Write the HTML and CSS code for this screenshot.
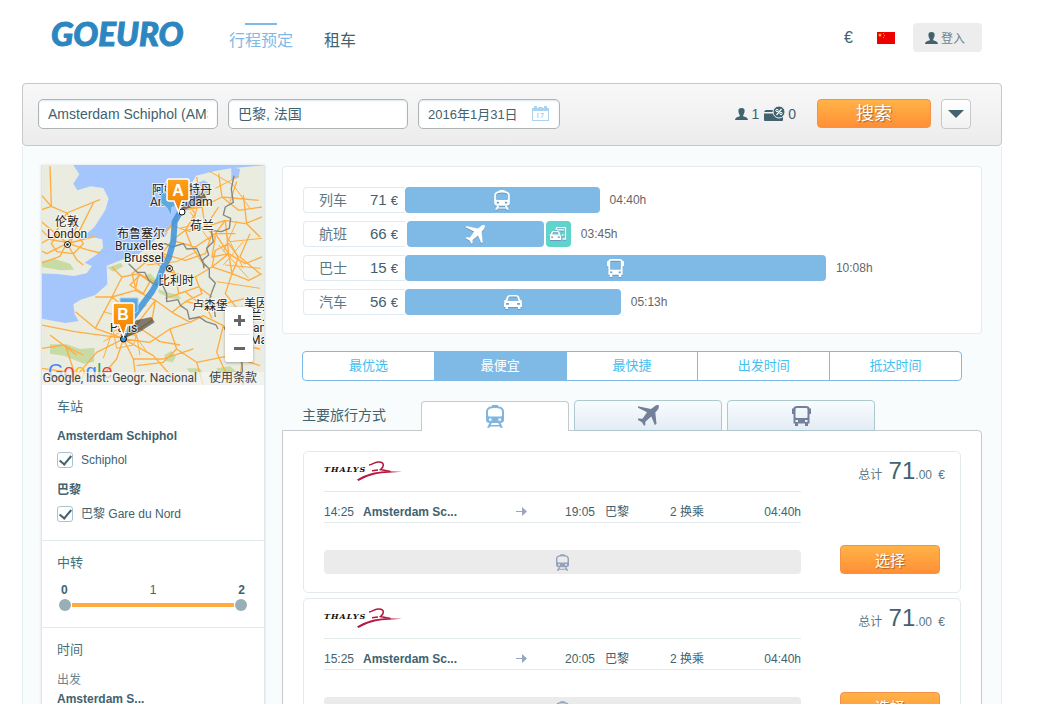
FILE: index.html
```html
<!DOCTYPE html>
<html lang="zh-CN">
<head>
  <meta charset="UTF-8" />
  <meta name="viewport" content="width=device-width, initial-scale=1.0" />
  <title>GoEuro</title>
  <link rel="stylesheet" href="styles.css">
</head>
<body>
  <!-- shared icons -->
  <svg class="sprite" aria-hidden="true">
    <symbol id="i-train" viewBox="0 0 18 23">
      <path fill-rule="evenodd" d="M6 0h6v1.200c4 .4 6 2.300 6 5.300v8.500c0 2-1.500 3-3.500 3h-11C1.500 18 0 17 0 15V6.500c0-3 2-4.900 6-5.300zM2 6.500V10q0 1.500 1.500 1.500h11q1.500 0 1.500-1.500V6.500C16 4 13.500 3 9 3S2 4 2 6.500zM3 13.500v2.300h2.500v-2.300zM12.500 13.500v2.300H15v-2.300z"/>
      <path d="M3.500 18h2.300l-1 2h8.400l-1-2h2.300l2.500 4.800h-2.500l-.7-1.400H4.200l-.7 1.400H1z"/>
    </symbol>
    <symbol id="i-plane" viewBox="0 0 21 21">
      <path d="M20.700 0c-2-.3-3.500.3-5 2L13 4 0 1.200v1.500l9 4.600-4.500 6.500-4.500-.2V15l4 2.200 2 3.500 1.300-.7v-3.300l6-5.100L16.800 20l1.700-1-1.200-11.500L19.500 5c1.300-1.500 1.500-3 1.200-5z"/>
    </symbol>
    <symbol id="i-bus" viewBox="0 0 19 20">
      <path fill-rule="evenodd" d="M5 0h9q3.500.2 3.500 2.500H19V8h-1.500v9.500H16V20h-3v-2.500H6V20H3v-2.500H1.500V8H0V2.500h1.500Q1.500.2 5 0zM3.500 3.500V11q0 1 1 1h10q1 0 1-1V3.500q0-1.500-1-1.500h-10q-1 0-1 1.500zM3.500 14v2H6v-2zM13 14v2h2.500v-2z"/>
    </symbol>
    <symbol id="i-car" viewBox="0 0 18 14">
      <path fill-rule="evenodd" d="M6 0h6q2.500 0 3 1.500L16.300 5l1.700.4v1l-.7.4q.7.800.7 1.700V12h-1.500v2h-2.500v-2H4v2H1.500v-2H0V8.500q0-.9.7-1.700L0 6.400v-1L1.700 5 3 1.500Q3.500 0 6 0zM4.800 2L3.500 6h11l-1.300-4Q13 1.500 12 1.500H6Q5 1.500 4.800 2zM2.200 8v2h2.600V8zM13.200 8v2h2.600V8z"/>
    </symbol>
    <symbol id="i-transfer" viewBox="0 0 18 14">
      <path fill="none" stroke="#fff" stroke-width="1.300" d="M7 3l.5-2q.2-.4 1-.4h7q1 0 1 1V12h-3M8 2.800h7M13 8h1.500"/>
      <path fill-rule="evenodd" d="M4 4h5q1 0 1.500 1L11.200 7.500 12 9v4H1V9l-.7-1.500 1.500-.3L2.500 5Q3 4 4 4zM4 5.300L3.300 7.500h6.400L9 5.300zM2.200 9.500V11h2V9.500zM8.800 9.500V11h2V9.500z"/>
    </symbol>
    <symbol id="i-user" viewBox="0 0 13 12">
      <path d="M6.500 0C9 0 10 1.500 9.500 4c-.3 1.500-.7 2.200-1.300 3v1.300C10 9 12.500 9.300 13 12H0c.5-2.700 3-3 4.800-3.700V7C4.200 6.200 3.800 5.500 3.500 4 3 1.500 4 0 6.500 0z"/>
    </symbol>
    <symbol id="i-arrow" viewBox="0 0 11 9">
      <path d="M0 4h6V0l5 4.500L6 9V5H0z"/>
    </symbol>
    <symbol id="i-thalys" viewBox="0 0 45 20">
      <path d="M0 18.500C8 13.500 19 10.500 28 10.300l17 .5-17 1.200C19 12.500 9 15.500 1.500 20z"/>
      <path fill="none" stroke="#b5193f" stroke-width="1.500" d="M12 4c3-.2 5-2.500 9-3 6-.7 7 4 2.500 7.500l10 2M15 9.800l6-.8"/>
    </symbol>
  </svg>

  <div class="page">
    <header class="header">
      <a href="#" class="logo">GOEURO</a>
      <nav class="nav">
        <a href="#" class="active">行程预定</a>
        <a href="#">租车</a>
      </nav>
      <div class="user-tools">
        <a href="#" class="currency">€</a>
        <a href="#" class="flag" aria-label="中文">
          <svg width="18" height="12" viewBox="0 0 18 12"><rect width="18" height="12" fill="#ee0000"/><path fill="#fd0" d="M3 1l.6 1.400H5L3.900 3.300l.4 1.400L3 3.900l-1.300.8.4-1.400L1 2.400h1.400z"/><path fill="#fa0" d="M6 1h1v1H6zM7 3h1v1H7zM6 5h1v1H6z"/></svg>
        </a>
        <button class="login-btn"><svg width="13" height="12"><use href="#i-user"/></svg>登入</button>
      </div>
    </header>

    <form class="search-bar">
      <input type="text" class="field" aria-label="出发地" value="Amsterdam Schiphol (AMS), 荷兰">
      <input type="text" class="field" aria-label="目的地" value="巴黎, 法国">
      <div class="date-field">
        <input type="text" class="field" aria-label="日期" value="2016年1月31日">
        <svg width="17" height="15" viewBox="0 0 17 15" fill="#a9d3ee"><path fill-rule="evenodd" d="M0 2h2V0h3v2h1.500V1h4v1H12V0h3v2h2v13H0zM1 5v9h15V5z"/><path fill="none" stroke="#a9d3ee" d="M5 8l1-.5V12M8.500 7.500h3L9.500 12"/></svg>
      </div>
      <div class="passengers">
        <svg width="13" height="12"><use href="#i-user"/></svg><span>1</span>
        <svg class="card-icon" width="21" height="16" viewBox="0 0 21 16"><path d="M1.500 4H10v2H0zM0 7.500h19V14q0 1-1 1H1q-1 0-1-1z"/><circle cx="15" cy="6" r="6" stroke="#f3f3f3"/><path fill="none" stroke="#fff" stroke-width="1.200" d="M12.500 9l5-6"/><circle cx="13" cy="4.500" r="1.200" fill="none" stroke="#fff"/><circle cx="17" cy="7.500" r="1.200" fill="none" stroke="#fff"/></svg><span>0</span>
      </div>
      <button type="button" class="orange-btn search-btn">搜索</button>
      <button type="button" class="more-btn" aria-label="更多选项"></button>
    </form>

    <div class="content">
      <aside class="sidebar">
        <div class="map">
          <svg width="222" height="220" viewBox="1 0 222 220">
            <defs>
              <linearGradient id="pin" x2="0" y2="1"><stop offset="0" stop-color="#ffa21a"/><stop offset="1" stop-color="#ef7d00"/></linearGradient>
              <filter id="soft"><feGaussianBlur stdDeviation="1.500"/></filter>
            </defs>
            <rect width="223" height="220" fill="#a5c5fd"/>
            <g transform="translate(-11 -10) scale(.3333)">
              <g fill="#e9ecde">
                <path d="M30 30h100l18 28-18 28 12 20 40-12 38 5 16 32-10 34-32 50-42 38 30-8 35 8 2 26-20 20-35 24 22 10-16 22-38 8-50-6-60-2-30 14z"/>
                <path d="M710 30L604 40l-50 8-56 14-28 50-30 90-44 36-26 20-44 40-60 20-36 14 2 56-36 32-44 14-22 14 4 30 12 20-40 6-76-14v200h680z"/>
              </g>
              <g fill="#a5c5fd"><path d="M490 90l32-14 20 12-12 34-26 20-20-14zM604 36l26 6-4 26-22 6zM388 244l26-14-10 18z"/></g>
              <g fill="#c8dba4">
                <path d="M34 318l40-6 46 14 12 18-40 2-58-10zM60 568l50 0 40 14 44-4-2 42-30 6-60-24-42-6zM340 365l20-10 20 20-14 14zM404 600l20-12 14 16-10 18-22-4zM385 402l20 8 40 10 10 12-34-2-34-16zM232 338l40-14 8 10-30 16zM470 640l40 0 8 14-30 10zM560 640l40-6 20 16-50 12zM510 100l20 10-10 20-16-8z"/>
              </g>
              <g fill="none" stroke="#ffad42" stroke-width="4" stroke-linejoin="round">
                <path d="M34 120l30 34 46 20 30 40-18 50-60-10-28-30M110 174l-40 70-34 20M110 264l40-40 40-80M110 264l60 20 40 10M110 264l-20 40-54 20M60 34l4 120M110 264l30 50 20 16M34 200l80 66M110 266l-60 30-14-8M80 240l60-4 20 30-30 30-50-6-16-24zM110 174l100-40M64 154l-30 10M120 264l74-20"/>
                <path d="M246 336l30 30 50-10 60 30M276 366l-30 60-50 0M246 426l60 50-20 76M326 356l-10 50-70 20M316 406l60 30-90 116M136 470l60 50 84 30M34 510l100 20 150 20M196 520l50-94M280 552l-80 40-60 70-100 20M280 552l-20 60-60 70M280 552l30 60 10 80M280 552l80 10 60-40 60-20M280 552l90 50 70 80M310 612l90 0 90-30M420 522l20 60 60 40 20 70M480 502l40-20 60 30 60 60 50 10M500 622l100-20 90 30M160 600l-60-30-64 10M136 662l-30-92M60 540l80 60M376 436l50 36 54 30M376 436l-10 60-86 56M426 472l40-32 60 10 20 40M330 520l60 40 60 10M580 512l-20 80 40 90M440 582l-40 40-80 10M34 640l70 10 32 30M640 570l-10 110"/>
                <path d="M386 386l50-30 60 10 50-30 50-40M436 356l-40-60 30-40 40-30 30-50M426 256l70 20 60-40 60 0M466 226l60-10 40-60M496 176l-40-50-20 76-30 30M456 166l60-10 60-30 110 10M576 126l-10-70M516 156l10 60 30 30-10 60 50-10M596 296l-40-60 30-40 60 10 50-20M586 196l10 100 50 30 50-20M596 296l10 60-20 60 40 50 66 20M606 356l50 20 40-20M546 336l10-50 40-20 30 40-20 50-60-20M316 396l-10-40 60-50 50 0M346 296l60 50 30 10M436 356l10 60 60-20 40 30M496 366l20 50-50 24M396 296l70 20 60-20 20-60M466 226l20 50 40 60M440 156l60 0 20-60M630 306l60 50M576 126l50 40 70-10M500 66l16 90M620 80l-20 60M660 236l-30 70M526 216l60-20M640 120l10 86 40 40M406 430l60-20 60 50 120-30M300 390l30-30 30 20-20 36z"/>
                <path d="M540 50l70 40 50 70M556 100l70-36M420 210l60 20 70-20M350 330l90-10 60-30M600 260l96-10M586 330l106 10M560 380l130 20M620 200l-40 90M640 260l-60 70M566 270l90 100M590 240l50 100M480 170l60 90M470 140l30 20-10 50-40 10M350 450l-60 40-70-20M250 520l-30 90M330 600l-10-60-50 0M300 520l50 70M220 560l70-40M260 580l50-10 10-30-30-30-40 20z" stroke-width="3"/>
              </g>
              <g fill="none" stroke="#85857f" stroke-width="4" stroke-linejoin="round">
                <path d="M612 62l-8 40 6 40-24 14-6 24 22 10-4 30-24 10-30-4 6 34-20 20 6 20-18 14 4 26M376 272l30-6 20 10 34-10 10 16 30-2 8 18 10 24 20 20 0 24 18 18-10 26-8 24-22 8M296 326l26 26 22 0 12 24 20 14 20-4 14 30 0 24 34-6 8 18 20 14 6 26 30-6 20 14 30 10 6 12M528 432l24 20 4 34M640 690l-4-66-20-34-34-74"/>
              </g>
              <path fill="none" stroke="#3c92dd" stroke-opacity=".85" stroke-width="18" stroke-linejoin="round" d="M450 172l-16 28-4 60-14 50-18 30-12 34-20 36-30 40-34 46-22 50"/>
              <g fill="#222" opacity=".55" filter="url(#soft)"><path d="M448 170l30-46 44-10 10 20-40 20zM282 550l36-54 46-10 10 16-44 28z"/></g>
            </g>
            <g class="map-text">
              <text x="14" y="61">伦敦</text><text x="6" y="73">London</text>
              <text x="111" y="29">阿姆斯特丹</text><text x="109" y="41">Amsterdam</text>
              <text x="149" y="65">荷兰</text>
              <text x="76" y="73">布鲁塞尔</text><text x="74" y="85">Bruxelles</text><text x="83" y="97">Brussel</text>
              <text x="117" y="120">比利时</text><text x="151" y="145">卢森堡</text>
              <text x="203" y="143">美因</text><text x="209" y="155">兰克</text><text x="212" y="167">am</text><text x="209" y="179">Main</text>
              <text x="69" y="167">Paris</text>
            </g>
            <g fill="#fff" stroke="#111"><circle cx="26.500" cy="79.500" r="3"/><circle cx="128.500" cy="103.500" r="3"/><circle cx="141" cy="47" r="3"/><circle cx="82.500" cy="174" r="3" fill="#3c92dd"/></g>
            <g fill="#111"><circle cx="26.500" cy="79.500" r="1.300"/><circle cx="128.500" cy="103.500" r="1.300"/></g>
            <g fill="#5ea9dd" stroke="#a8d2f0"><path d="M122 28h12v14h-3l-1 9-4-8-6-5v-8zM79 133h18v13l-8 5H79z"/></g>
            <g fill="url(#pin)" stroke="#fff" stroke-width="1.500">
              <path d="M128 14h18q2 0 2 2v18q0 2-2 2h-5l-3.500 11-4.500-11h-5q-2 0-2-2V16q0-2 2-2z"/>
              <path d="M74 138h17q2 0 2 2v18q0 2-2 2h-5l-3.500 11-4.500-11h-4q-2 0-2-2v-18q0-2 2-2z"/>
            </g>
            <g class="pin-text"><text x="137" y="31">A</text><text x="82" y="155">B</text></g>
          </svg>
          <div class="google"><span>G</span><span>o</span><span>o</span><span>g</span><span>l</span><span>e</span></div>
          <div class="attribution"><span>Google, Inst. Geogr. Nacional</span><a href="#">使用条款</a></div>
          <div class="zoom">
            <button aria-label="放大"><svg width="11" height="11"><path d="M0 4h4V0h3v4h4v3H7v4H4V7H0z"/></svg></button>
            <button aria-label="缩小"><svg width="11" height="11"><path d="M0 4h11v3H0z"/></svg></button>
          </div>
        </div>
        <section class="filter">
          <h3>车站</h3>
          <h4>Amsterdam Schiphol</h4>
          <label class="check"><input type="checkbox" checked>Schiphol</label>
          <h4>巴黎</h4>
          <label class="check"><input type="checkbox" checked>巴黎 Gare du Nord</label>
        </section>
        <section class="filter">
          <h3>中转</h3>
          <div class="scale"><b>0</b><span>1</span><b>2</b></div>
          <div class="slider">
            <input type="range" min="0" max="2" value="0" aria-label="最少中转">
            <input type="range" min="0" max="2" value="2" aria-label="最多中转">
          </div>
        </section>
        <section class="filter">
          <h3>时间</h3>
          <p>出发</p>
          <h4>Amsterdam S...</h4>
        </section>
      </aside>

      <main class="main">
        <section class="chart">
          <div class="chart-row">
            <div class="chart-label"><span>列车</span><b>71 <small>€</small></b></div>
            <div class="track"><div class="bar" style="width:35%"><svg width="16" height="20"><use href="#i-train"/></svg></div><span>04:40h</span></div>
          </div>
          <div class="chart-row">
            <div class="chart-label"><span>航班</span><b>66 <small>€</small></b></div>
            <div class="track split"><div class="bar" style="width:24.700%"><svg width="19" height="19"><use href="#i-plane"/></svg></div><div class="bar transfer"><svg width="18" height="14"><use href="#i-transfer"/></svg></div><span>03:45h</span></div>
          </div>
          <div class="chart-row">
            <div class="chart-label"><span>巴士</span><b>15 <small>€</small></b></div>
            <div class="track"><div class="bar" style="width:75.700%"><svg width="17" height="18"><use href="#i-bus"/></svg></div><span>10:08h</span></div>
          </div>
          <div class="chart-row">
            <div class="chart-label"><span>汽车</span><b>56 <small>€</small></b></div>
            <div class="track"><div class="bar" style="width:38.800%"><svg width="18" height="14"><use href="#i-car"/></svg></div><span>05:13h</span></div>
          </div>
        </section>

        <div class="sort">
          <button>最优选</button>
          <button class="active">最便宜</button>
          <button>最快捷</button>
          <button>出发时间</button>
          <button>抵达时间</button>
        </div>

        <div class="modes">
          <span class="modes-title">主要旅行方式</span>
          <button class="active" aria-label="列车"><svg width="18" height="23"><use href="#i-train"/></svg></button>
          <button aria-label="航班"><svg width="21" height="21"><use href="#i-plane"/></svg></button>
          <button aria-label="巴士"><svg width="19" height="20"><use href="#i-bus"/></svg></button>
        </div>

        <section class="results">
          <article class="trip">
            <div class="trip-info">
              <div class="carrier"><span>THALYS</span><svg width="45" height="20"><use href="#i-thalys"/></svg></div>
              <div class="trip-row">
                <span>14:25</span><b>Amsterdam Sc...</b><svg width="11" height="9"><use href="#i-arrow"/></svg>
                <span>19:05</span><span class="to">巴黎</span><span>2 换乘</span><span class="duration">04:40h</span>
              </div>
              <div class="trip-bar"><svg width="13" height="17"><use href="#i-train"/></svg></div>
            </div>
            <div class="trip-price">
              <div class="price">总计 <b>71</b><span>.00</span> €</div>
              <button class="orange-btn">选择</button>
            </div>
          </article>
          <article class="trip">
            <div class="trip-info">
              <div class="carrier"><span>THALYS</span><svg width="45" height="20"><use href="#i-thalys"/></svg></div>
              <div class="trip-row">
                <span>15:25</span><b>Amsterdam Sc...</b><svg width="11" height="9"><use href="#i-arrow"/></svg>
                <span>20:05</span><span class="to">巴黎</span><span>2 换乘</span><span class="duration">04:40h</span>
              </div>
              <div class="trip-bar"><svg width="13" height="17"><use href="#i-train"/></svg></div>
            </div>
            <div class="trip-price">
              <div class="price">总计 <b>71</b><span>.00</span> €</div>
              <button class="orange-btn">选择</button>
            </div>
          </article>
        </section>
      </main>
    </div>
  </div>
</body>
</html>
```
FILE: styles.css
```css
* { box-sizing: border-box; }
body { margin: 0; background: #fff; color: #41626e; font-family: "Liberation Sans", "Noto Sans CJK SC", sans-serif; font-size: 12px; line-height: 16px; }
a { color: inherit; text-decoration: none; }
button { font-family: inherit; cursor: pointer; padding: 0; }
svg { display: block; flex: none; }
h3, h4, p { margin: 0; }
.sprite { position: absolute; width: 0; height: 0; }
.page { max-width: 1049px; padding: 0 47px 0 22px; }

/* header */
.header { display: flex; align-items: flex-start; height: 83px; padding: 0 20px 0 29px; }
.logo { margin-top: 17px; width: 178px; color: #2c87c0; font-family: Lato, sans-serif; font-size: 33px; line-height: 32px; font-weight: 900; font-style: italic; -webkit-text-stroke: 1px #2c87c0; }
.nav { display: flex; gap: 31px; padding-top: 23px; font-size: 16px; line-height: 24px; }
.nav a { display: flex; flex-direction: column; align-items: center; padding-top: 6px; }
.nav .active { color: #7fbae6; padding-top: 0; }
.nav .active::before { content: ""; width: 32px; height: 2px; margin-bottom: 4px; background: #7fbae6; }
.user-tools { display: flex; align-items: center; margin: 23px 0 0 auto; }
.currency { font-size: 16px; }
.flag { margin: 0 18px 0 24px; }
.login-btn { display: flex; align-items: center; gap: 3px; width: 69px; height: 29px; padding-left: 12px; border: 0; border-radius: 4px; background: #ededed; color: #6b8590; font-size: 12px; }
.login-btn svg, .passengers svg { fill: #41626e; }

/* search */
.search-bar { display: flex; align-items: flex-start; gap: 10px; padding: 15px 30px 16px 15px; border: 1px solid #c6c8c9; border-radius: 4px; background: linear-gradient(#f8f8f8, #ececec); }
.field { width: 180px; height: 30px; padding: 0 9px 2px; border: 1px solid #aeb4b6; border-radius: 5px; background: #fff; box-shadow: inset 0 1px 2px #dbe8ef; color: #41626e; font-family: inherit; font-size: 14px; }
.date-field { position: relative; }
.date-field .field { width: 142px; font-size: 13px; }
.date-field svg { position: absolute; right: 11px; top: 7px; }
.passengers { display: flex; align-items: center; gap: 3px; height: 30px; margin: 0 11px 0 auto; font-size: 14px; }
.card-icon { margin-left: 2px; }
.orange-btn { width: 100px; height: 29px; border: 1px solid #f3924a; border-radius: 4px; background: linear-gradient(#ffb347, #ff8f36); color: #fff; font-size: 15px; text-shadow: 1px 1px 1px #a8642a; }
.search-btn { width: 114px; font-size: 18px; line-height: 24px; }
.more-btn { display: flex; align-items: center; justify-content: center; width: 30px; height: 30px; border: 1px solid #c6c8c9; border-radius: 4px; background: linear-gradient(#fff, #f1f1f1); }
.more-btn::before { content: ""; border: 8px solid transparent; border-top-color: #41626e; border-bottom: 0; }

.content { display: flex; align-items: flex-start; gap: 17px; padding: 19px 19px 30px 18px; border: solid #e6edef; border-width: 0 1px; background: #f8fcfd; }

/* sidebar */
.sidebar { flex: none; border: solid #dfe6e8; border-width: 0 1px 1px; background: #fff; box-shadow: 0 0 3px #dce3e5; }
.map { position: relative; width: 222px; height: 220px; overflow: hidden; }
.map-text { font-family: Roboto, "Noto Sans CJK SC", sans-serif; font-size: 12px; fill: #222; stroke: #fff; stroke-width: 2px; stroke-opacity: .7; paint-order: stroke; }
.pin-text { font-size: 16px; font-weight: bold; fill: #fff; text-anchor: middle; }
.google { position: absolute; left: 6px; bottom: 2px; font-size: 20px; line-height: 24px; text-shadow: 0 0 1px #fff; color: #4285f4; }
.google span:nth-child(2), .google span:nth-child(6) { color: #ea4335; }
.google span:nth-child(3) { color: #fbbc05; }
.google span:nth-child(5) { color: #34a853; }
.attribution { position: absolute; inset: auto 0 0 0; display: flex; justify-content: flex-end; gap: 12px; height: 13px; padding-right: 7px; background: rgba(245,245,245,.7); color: #444; font-family: Roboto, "Noto Sans CJK SC", sans-serif; line-height: 13px; white-space: nowrap; }
.zoom { position: absolute; right: 11px; bottom: 23px; width: 28px; padding: 0 4px; border-radius: 2px; background: #fff; box-shadow: 0 1px 3px rgba(0,0,0,.3); }
.zoom button { display: flex; align-items: center; justify-content: center; width: 20px; height: 27px; border: 0; background: none; fill: #666; }
.zoom button + button { border-top: 1px solid #e6e6e6; height: 28px; }
.filter { padding: 12px 15px 14px; }
.filter + .filter { border-top: 1px solid #dfe8ea; }
.filter h3 { font-size: 13px; line-height: 20px; font-weight: normal; margin-bottom: 10px; color: #447079; }
.filter h4 { font-size: 12px; line-height: 18px; }
.filter p { line-height: 20px; color: #6b8590; }
.check { display: flex; align-items: center; gap: 8px; height: 30px; margin-bottom: 6px; }
.check:last-child { margin-bottom: -3px; }
.check input { appearance: none; display: flex; justify-content: center; width: 16px; height: 16px; margin: 0; border: 1px solid #a9c4cf; border-radius: 3px; background: #fff; }
.check input:checked::after { content: ""; width: 5px; height: 10px; border: solid #41626e; border-width: 0 2px 2px 0; transform: rotate(40deg); }
.scale { display: flex; justify-content: space-between; padding: 0 4px; line-height: 14px; }
.slider { display: grid; align-items: center; height: 16px; margin: 0 2px; background: linear-gradient(#ffab40, #ffab40) center / 162px 4px no-repeat; }
.slider input { grid-area: 1 / 1; appearance: none; width: 100%; height: 14px; margin: 0; background: none; pointer-events: none; }
.slider input::-webkit-slider-thumb { appearance: none; width: 12px; height: 12px; border-radius: 50%; background: #97afb5; pointer-events: auto; }

/* comparison chart */
.main { flex: 1; min-width: 0; }
.chart { display: grid; gap: 8px; margin-top: 1px; padding: 20px 20px 18px; border: 1px solid #e6ecee; border-radius: 4px; background: #fff; }
.chart-row { display: flex; height: 26px; }
.chart-label { display: flex; align-items: center; justify-content: space-between; width: 102px; padding: 0 7px 0 15px; border: 1px solid #dfebf3; border-right: 0; border-radius: 4px 0 0 4px; font-size: 14px; }
.chart-label span { color: #5b7883; }
.chart-label b { font-size: 15px; font-weight: normal; }
.chart-label small { font-size: 13px; }
.track { flex: 1; display: flex; align-items: center; color: #666; }
.track > span { margin-left: 10px; }
.split { gap: 2px; padding-left: 2px; }
.split > span { margin-left: 8px; }
.bar { display: flex; align-items: center; justify-content: center; height: 26px; border-radius: 4px; background: #7fbae6; fill: #fff; }
.bar svg { filter: drop-shadow(0 1px 0 #6a99bd); }
.bar.transfer { width: 25px; background: #5fd3cc; }

.sort { display: flex; margin: 17px 20px 0; border: 1px solid #7fbae6; border-radius: 4px; background: #fff; overflow: hidden; }
.sort button { flex: 1; height: 28px; padding-bottom: 3px; border: 0; background: none; color: #45bff0; font-size: 13px; }
.sort button + button { border-left: 1px solid #7fbae6; }
.sort .active { background: #7fbae6; color: #fff; }

.modes { position: relative; display: flex; align-items: flex-end; gap: 5px; margin: 19px 20px -1px; }
.modes-title { width: 114px; font-size: 14px; line-height: 31px; color: #41626e; }
.modes button { display: flex; align-items: center; justify-content: center; width: 148px; height: 31px; border: 1px solid #afc8d0; border-radius: 4px 4px 0 0; background: linear-gradient(#f8fcfd, #e3ecf5); fill: #74809a; }
.modes .active { height: 30px; border-color: #c6cacc; border-bottom: 0; background: #fff; fill: #7fb5df; }

/* results */
.results { display: grid; gap: 5px; padding: 20px; border: 1px solid #c6cacc; border-radius: 0 4px 0 0; background: #fff; }
.trip { display: flex; justify-content: space-between; padding: 9px 15px 18px 20px; border: 1px solid #e2eaec; border-radius: 5px; }
.trip-info { flex: 1; max-width: 477px; }
.carrier { display: flex; height: 30px; color: #111; font-family: "DejaVu Serif", serif; font-size: 8px; font-weight: bold; font-style: italic; letter-spacing: 1px; }
.carrier svg { margin-left: -9px; fill: #b5193f; }
.trip-row { display: grid; grid-template-columns: 39px 153px 49px 40px 65px 1fr auto; align-items: center; height: 32px; padding-top: 9px; border: solid #e2eaec; border-width: 1px 0; }
.trip-row svg { fill: #98a5bf; }
.trip-bar { display: flex; align-items: center; justify-content: center; height: 24px; margin-top: 27px; border-radius: 4px; background: #ebebeb; fill: #94a2be; }
.trip-price { display: flex; flex-direction: column; align-items: flex-end; justify-content: space-between; }
.trip-price .orange-btn { margin-right: 5px; }
.price { line-height: 20px; color: #5b7883; }
.price b { margin-left: 3px; color: #41626e; font-size: 24px; font-weight: normal; }
.price span { margin-right: 3px; }
```
